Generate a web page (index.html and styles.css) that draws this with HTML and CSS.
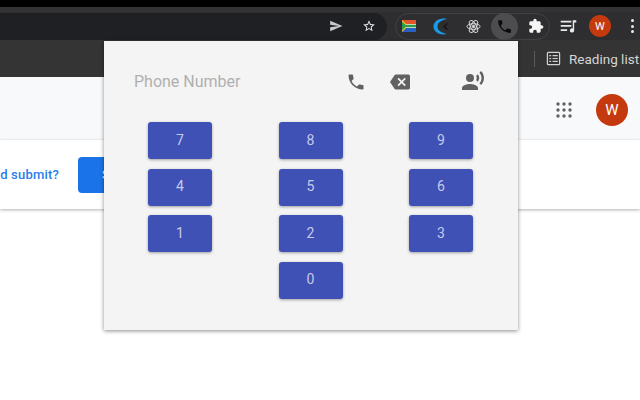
FILE: index.html
```html
<!DOCTYPE html>
<html lang="en">
<head>
    <meta charset="UTF-8">
    <title>Phone Dialer</title>
    <link rel="stylesheet" href="styles.css">
</head>
<body>
    <div class="title-strip"></div>
    <div class="tab-strip"></div>
    <div class="toolbar">
        <div class="omnibox">
            <svg class="tool-icon" viewBox="0 0 24 24"><path fill="#c8c9cb" d="M2 21l21-9L2 3v7l15 2-15 2z"/></svg>
            <svg class="tool-icon" viewBox="0 0 24 24"><path fill="#e8eaed" d="M22 9.24l-7.19-.62L12 2 9.19 8.63 2 9.24l5.46 4.73L5.82 21 12 17.27 18.18 21l-1.63-7.03L22 9.24zM12 15.4l-3.76 2.27 1-4.28-3.32-2.88 4.38-.38L12 6.1l1.71 4.04 4.38.38-3.32 2.88 1 4.28L12 15.4z"/></svg>
        </div>
        <div class="ext-pill">
            <svg class="ext-flag" viewBox="0 0 14 12">
                <rect width="14" height="12" fill="#e2542c"/>
                <rect y="6" width="14" height="6" fill="#2a5fc4"/>
                <rect y="4" width="14" height="4" fill="#f0f0e0"/>
                <path d="M0 0l6 6-6 6z" fill="#f4c430"/>
                <path d="M0 1.500L4.500 6 0 10.500zM4 4.800h10v2.400H4z" fill="#2f9a4a"/>
            </svg>
            <svg class="ext-crescent" viewBox="0 0 15 17">
                <path d="M14 1C6 -1 .5 3.500 .5 8.500S6 18 14 16C9 15 4.500 13 4.500 8.500S9 2 14 1z" fill="#1a9be8"/>
                <path d="M14.500 5.500L11 8.500l3.500 3" fill="none" stroke="#151515" stroke-width="1.500"/>
            </svg>
            <svg class="ext-atom" viewBox="0 0 24 24" fill="none" stroke="#d6d7d9" stroke-width="1.600">
                <ellipse cx="12" cy="12" rx="10.500" ry="4.500"/>
                <ellipse cx="12" cy="12" rx="10.500" ry="4.500" transform="rotate(60 12 12)"/>
                <ellipse cx="12" cy="12" rx="10.500" ry="4.500" transform="rotate(120 12 12)"/>
                <circle cx="12" cy="12" r="2" fill="#d6d7d9"/>
            </svg>
            <div class="ext-active">
                <svg class="ext-phone" viewBox="0 0 24 24"><path fill="#0c0c0c" d="M6.62 10.79c1.44 2.83 3.76 5.14 6.59 6.59l2.2-2.2c.27-.27.67-.36 1.02-.24 1.12.37 2.33.57 3.57.57.55 0 1 .45 1 1V20c0 .55-.45 1-1 1C10.61 21 3 13.39 3 4c0-.55.45-1 1-1h3.5c.55 0 1 .45 1 1 0 1.25.2 2.45.57 3.57.11.35.03.74-.25 1.02l-2.2 2.2z"/></svg>
            </div>
            <svg class="ext-puzzle" viewBox="0 0 24 24"><path fill="#f6f6f6" d="M20.5 11H19V7c0-1.1-.9-2-2-2h-4V3.5C13 2.12 11.88 1 10.500 1S8 2.120 8 3.500V5H4c-1.100 0-2 .9-2 2v3.800h1.500c1.490 0 2.700 1.210 2.700 2.700s-1.210 2.700-2.700 2.700H2V20c0 1.100.9 2 2 2h3.800v-1.500c0-1.490 1.210-2.700 2.700-2.700s2.700 1.210 2.700 2.700V22H17c1.100 0 2-.9 2-2v-4h1.500c1.380 0 2.500-1.120 2.500-2.500S21.880 11 20.500 11z"/></svg>
        </div>
        <svg class="queue" viewBox="0 0 24 24"><path fill="#e8eaed" d="M1 4h15v2.400H1zM1 10h15v2.400H1zM1 16h9v2.400H1zM18 3h5v3.200h-3v11.300a3 3 0 1 1-2-2.800z"/></svg>
        <div class="avatar avatar-small">W</div>
        <div class="kebab"><span></span><span></span><span></span></div>
    </div>
    <div class="bookmarks">
        <div class="divider"></div>
        <svg class="list-icon" viewBox="0 0 16 16" fill="none" stroke="#d0d1d3" stroke-width="1.300">
            <rect x="1.500" y="1.500" width="13" height="13" rx="1"/>
            <path d="M3.500 5h2M7 5h5.500M3.500 8h2M7 8h5.500M3.500 11h2M7 11h5.500"/>
        </svg>
        <span class="reading">Reading list</span>
    </div>
    <div class="page">
        <div class="page-head">
            <svg class="apps" viewBox="0 0 16 16" fill="#5f6368">
                <circle cx="2" cy="2" r="1.700"/><circle cx="8" cy="2" r="1.700"/><circle cx="14" cy="2" r="1.700"/>
                <circle cx="2" cy="8" r="1.700"/><circle cx="8" cy="8" r="1.700"/><circle cx="14" cy="8" r="1.700"/>
                <circle cx="2" cy="14" r="1.700"/><circle cx="8" cy="14" r="1.700"/><circle cx="14" cy="14" r="1.700"/>
            </svg>
            <div class="avatar avatar-large">W</div>
        </div>
        <div class="card">
            <span class="submit-text">d submit?</span>
            <div class="submit-btn">Submit</div>
        </div>
    </div>

    <div class="popup">
        <div class="popup-head">
            <span class="phone-label">Phone Number</span>
            <svg class="popup-icon" viewBox="0 0 24 24"><path fill="#616161" d="M20 15.500c-1.250 0-2.450-.2-3.570-.57-.35-.11-.74-.03-1.020.24l-2.200 2.200c-2.830-1.440-5.150-3.750-6.590-6.590l2.200-2.210c.28-.26.36-.65.25-1C8.700 6.450 8.500 5.250 8.500 4c0-.55-.45-1-1-1H4c-.55 0-1 .45-1 1 0 9.390 7.610 17 17 17 .55 0 1-.45 1-1v-3.500c0-.55-.45-1-1-1z"/></svg>
            <svg class="popup-icon icon-back" viewBox="0 0 24 24"><path fill="#616161" d="M22 3H7c-.69 0-1.230.35-1.590.88L0 12l5.410 8.110c.36.53.9.89 1.590.89h15c1.100 0 2-.9 2-2V5c0-1.100-.9-2-2-2zm-3 12.590L17.590 17 14 13.410 10.410 17 9 15.590 12.590 12 9 8.410 10.410 7 14 10.590 17.590 7 19 8.410 15.410 12 19 15.590z"/></svg>
            <svg class="popup-icon icon-voice" viewBox="0 0 24 24"><circle cx="9" cy="9" r="4" fill="#616161"/><path fill="#616161" d="M9 15c-2.670 0-8 1.340-8 4v2h16v-2c0-2.660-5.330-4-8-4zm7.760-9.640l-1.680 1.690c.84 1.180.84 2.710 0 3.890l1.680 1.690c2.020-2.020 2.020-5.070 0-7.270zM20.070 2l-1.630 1.630c2.770 3.020 2.770 7.560 0 10.740L20.070 16c3.900-3.890 3.910-9.950 0-14z"/></svg>
        </div>
        <div class="keypad">
            <button class="key">7</button>
            <button class="key">8</button>
            <button class="key">9</button>
            <button class="key">4</button>
            <button class="key">5</button>
            <button class="key">6</button>
            <button class="key">1</button>
            <button class="key">2</button>
            <button class="key">3</button>
            <button class="key key-zero">0</button>
        </div>
    </div>
</body>
</html>
```

FILE: styles.css
```css
html, body {
    margin: 0;
    height: 400px;
    overflow: hidden;
}
body {
    font-family: Roboto, "Liberation Sans", sans-serif;
    background: #fff;
    display: flex;
    flex-direction: column;
}
.title-strip {
    height: 7px;
    background: #000;
}
.tab-strip {
    height: 5px;
    background: #333335;
}
.toolbar {
    height: 28px;
    background: #2e2e30;
    display: flex;
    align-items: center;
}
.omnibox {
    width: 387px;
    height: 27px;
    background: #1f2023;
    border-radius: 0 14px 14px 0;
    display: flex;
    align-items: center;
    justify-content: flex-end;
    gap: 19px;
    padding-right: 11px;
    box-sizing: border-box;
}
.tool-icon {
    width: 14px;
    height: 14px;
}
.ext-pill {
    width: 155px;
    height: 27px;
    margin-left: 8px;
    box-sizing: border-box;
    border: 1px solid #414245;
    border-radius: 14px;
    display: flex;
    align-items: center;
    padding-left: 6px;
}
.ext-flag {
    width: 14px;
    height: 12px;
    flex: none;
}
.ext-crescent {
    width: 15px;
    height: 17px;
    flex: none;
    margin-left: 17px;
}
.ext-atom {
    width: 15px;
    height: 15px;
    flex: none;
    margin-left: 18px;
}
.ext-active {
    width: 27px;
    height: 27px;
    border-radius: 50%;
    background: #4d4d4f;
    display: flex;
    align-items: center;
    justify-content: center;
    flex: none;
    margin-left: 10px;
}
.ext-phone {
    width: 17px;
    height: 17px;
}
.ext-puzzle {
    width: 16px;
    height: 16px;
    flex: none;
    margin-left: 10px;
}
.queue {
    width: 17px;
    height: 17px;
    margin-left: 10px;
    flex: none;
}
.avatar {
    border-radius: 50%;
    background: #c5390f;
    color: #fff;
    display: flex;
    align-items: center;
    justify-content: center;
    flex: none;
}
.avatar-small {
    width: 22px;
    height: 22px;
    font-size: 11px;
    margin-left: 12px;
}
.kebab {
    margin-left: 20px;
    display: flex;
    flex-direction: column;
    gap: 2.500px;
}
.kebab span {
    width: 3px;
    height: 3px;
    border-radius: 50%;
    background: #e8eaed;
}
.bookmarks {
    height: 37px;
    background: #343434;
    display: flex;
    align-items: center;
    padding-left: 534px;
    box-sizing: border-box;
    white-space: nowrap;
    overflow: hidden;
}
.divider {
    width: 1px;
    height: 16px;
    background: #5a5a5a;
}
.list-icon {
    width: 15px;
    height: 15px;
    margin-left: 11px;
    flex: none;
}
.reading {
    margin-left: 8px;
    font-size: 13.500px;
    color: #d4d5d7;
}
.page {
    flex: 1;
    background: #fff;
}
.page-head {
    height: 63px;
    box-sizing: border-box;
    padding-top: 2px;
    background: #f8f9fa;
    display: flex;
    align-items: center;
    justify-content: flex-end;
    padding-right: 12px;
}
.apps {
    width: 16px;
    height: 16px;
}
.avatar-large {
    width: 32px;
    height: 32px;
    font-size: 15px;
    margin-left: 24px;
}
.card {
    height: 69px;
    background: #fff;
    box-shadow: 0 1px 3px rgba(0, 0, 0, 0.3);
    display: flex;
    align-items: center;
}
.submit-text {
    width: 59px;
    flex: none;
    text-align: right;
    white-space: nowrap;
    font-size: 13px;
    font-weight: 500;
    letter-spacing: 0.2px;
    color: #2b7de9;
}
.submit-btn {
    width: 100px;
    height: 36px;
    margin-left: 19px;
    padding-left: 24px;
    box-sizing: border-box;
    background: #1a73e8;
    border-radius: 4px;
    color: #fff;
    font-size: 13px;
    display: flex;
    align-items: center;
}
.popup {
    position: absolute;
    left: 104px;
    top: 41px;
    width: 414px;
    height: 289px;
    background: #f4f4f4;
    box-shadow: 0 1px 4px rgba(0, 0, 0, 0.45);
}
.popup-head {
    height: 81px;
    display: flex;
    align-items: center;
    padding-left: 30px;
}
.phone-label {
    font-size: 16px;
    color: #b0b0b0;
    width: 212px;
}
.popup-icon {
    height: 20px;
    width: 20px;
    flex: none;
}
.icon-back {
    margin-left: 24px;
}
.icon-voice {
    margin-left: 51px;
    width: 24px;
    height: 24px;
    margin-top: -1px;
}
.keypad {
    display: grid;
    grid-template-columns: repeat(3, 64px);
    grid-auto-rows: 37px;
    column-gap: 66.500px;
    row-gap: 9.500px;
    padding-left: 44px;
}
.key {
    border: none;
    padding: 0 0 2px;
    background: #3f51b5;
    color: #c5cae9;
    border-radius: 3px;
    font-family: inherit;
    font-size: 14px;
    box-shadow: 0 1px 3px rgba(0, 0, 0, 0.35);
}
.key-zero {
    grid-column: 2;
}
```
